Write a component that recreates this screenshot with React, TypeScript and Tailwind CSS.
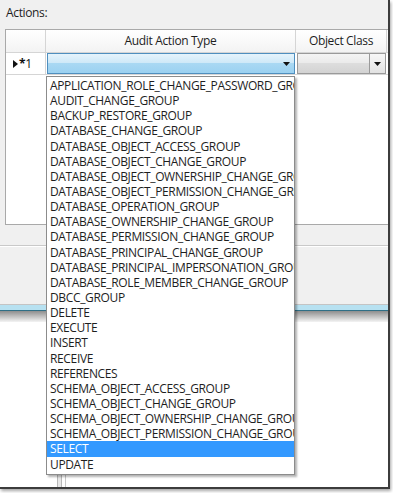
const ITEMS = [
  "APPLICATION_ROLE_CHANGE_PASSWORD_GROUP",
  "AUDIT_CHANGE_GROUP",
  "BACKUP_RESTORE_GROUP",
  "DATABASE_CHANGE_GROUP",
  "DATABASE_OBJECT_ACCESS_GROUP",
  "DATABASE_OBJECT_CHANGE_GROUP",
  "DATABASE_OBJECT_OWNERSHIP_CHANGE_GROUP",
  "DATABASE_OBJECT_PERMISSION_CHANGE_GROUP",
  "DATABASE_OPERATION_GROUP",
  "DATABASE_OWNERSHIP_CHANGE_GROUP",
  "DATABASE_PERMISSION_CHANGE_GROUP",
  "DATABASE_PRINCIPAL_CHANGE_GROUP",
  "DATABASE_PRINCIPAL_IMPERSONATION_GROUP",
  "DATABASE_ROLE_MEMBER_CHANGE_GROUP",
  "DBCC_GROUP",
  "DELETE",
  "EXECUTE",
  "INSERT",
  "RECEIVE",
  "REFERENCES",
  "SCHEMA_OBJECT_ACCESS_GROUP",
  "SCHEMA_OBJECT_CHANGE_GROUP",
  "SCHEMA_OBJECT_OWNERSHIP_CHANGE_GROUP",
  "SCHEMA_OBJECT_PERMISSION_CHANGE_GROUP",
  "SELECT",
  "UPDATE",
];

function Arrow() {
  return (
    <svg width="7" height="4" viewBox="0 0 7 4" className="block">
      <path d="M0 0h7L3.5 4z" fill="#111" />
    </svg>
  );
}

function HeaderCell({ w, label }: { w: string; label?: string }) {
  return (
    <div
      className={`${w} flex h-full items-center justify-center border-r border-[#d5d5d5] text-[12px] text-[#1e1e1e]`}
    >
      {label}
    </div>
  );
}

export default function App() {
  return (
    <div className="relative h-[493px] w-[393px] overflow-hidden bg-white font-['Open_Sans',sans-serif] tracking-[-0.35px]">
      {/* window */}
      <div className="flex h-[489px] w-[390px] flex-col border-r-2 border-b-2 border-[#3c3c3c] bg-[#f0f0f0] shadow-[1px_2px_3px_rgba(0,0,0,0.35)]">
        <div className="h-[29px] shrink-0 pl-[6px] pt-[5px] text-[12px] leading-[16px] text-[#1e1e1e]">
          Actions:
        </div>

        {/* grid */}
        <div className="ml-[5px] flex h-[196px] shrink-0 flex-col border-t border-b border-l border-[#a9a9a9] bg-white">
          <div className="flex h-[23px] shrink-0 border-b border-[#d5d5d5] bg-[linear-gradient(#ffffff,#f3f3f3)]">
            <HeaderCell w="w-[40px]" />
            <HeaderCell w="w-[250px]" label="Audit Action Type" />
            <HeaderCell w="w-[91px]" label="Object Class" />
            <div className="flex-1" />
          </div>
          <div className="flex h-[22px] shrink-0 border-b border-[#d5d5d5]">
            <div className="flex w-[40px] items-center border-r border-[#d5d5d5] pl-[6px] text-[12px] text-[#111]">
              <svg width="6" height="8" viewBox="0 0 6 8" className="mr-[1px]">
                <path d="M1 0v8l5-4z" fill="#111" />
              </svg>
              <span className="font-bold">*</span>
              <span>1</span>
            </div>
            <div className="flex w-[250px] items-center px-[1px]">
              <div className="flex h-[21px] w-full items-center justify-end border border-[#4f8fbf] bg-[linear-gradient(#e6f4fc_0%,#cfe9f8_45%,#a9d8f3_50%,#9bd1f1_100%)] pr-[4px]">
                <Arrow />
              </div>
            </div>
            <div className="flex w-[91px] items-center px-[1px]">
              <div className="flex h-[21px] w-full items-center justify-end border border-[#9a9a9a] bg-[linear-gradient(#f4f4f4_0%,#ebebeb_45%,#dddddd_50%,#d3d3d3_100%)]">
                <div className="flex h-full w-[16px] items-center justify-center border-l border-[#9a9a9a] bg-[linear-gradient(#f7f7f7,#e2e2e2)]">
                  <Arrow />
                </div>
              </div>
            </div>
          </div>
          <div className="flex-1" />
        </div>

        {/* lower panel */}
        <div className="h-[21px] shrink-0 border-b border-[#c9c9c9]" />
        <div className="h-[58px] shrink-0 border-t border-white" />
        <div className="h-[6px] shrink-0 border-t border-[#c4c4c4] bg-[#b7e1f1]" />
        <div className="h-[1px] shrink-0 bg-[#2f6f86]" />
        <div className="h-[11px] shrink-0 bg-[linear-gradient(#8e8e8e,#f4f4f4)]" />
        <div className="flex flex-1 bg-white">
          <div className="w-[57px]" />
          <div className="w-[5px] border-x border-[#b8b8b8] bg-[#e8e8e8]" />
          <div className="w-[4px] border-r border-[#c8c8c8]" />
        </div>
      </div>

      {/* dropdown list */}
      <div className="absolute top-[76px] left-[46px] w-[249px] border border-[#8c8c8c] bg-white pt-[1px] pb-[2px] shadow-[2px_2px_2px_rgba(0,0,0,0.3)]">
        {ITEMS.map((it) => (
          <div
            key={it}
            className={`h-[15.15px] overflow-hidden pl-[3px] text-[12px] leading-[15.15px] whitespace-nowrap ${
              it === "SELECT" ? "bg-[#3399ff] text-white" : "text-[#1e1e1e]"
            }`}
          >
            {it}
          </div>
        ))}
      </div>
    </div>
  );
}
